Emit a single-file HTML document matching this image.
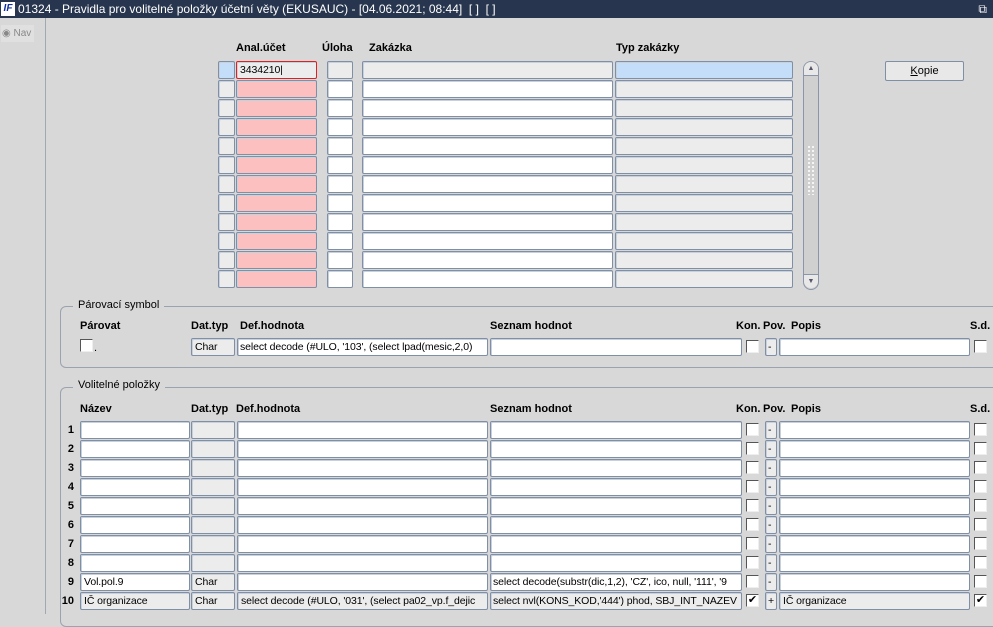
<!DOCTYPE html>
<html><head><meta charset="utf-8"><style>
*{box-sizing:border-box;margin:0;padding:0}
body{width:993px;height:614px;background:#d8d8d8;font-family:"Liberation Sans",Arial,sans-serif;font-size:11px;position:relative;overflow:hidden;color:#000}
.a{position:absolute}
.tb{left:0;top:0;width:993px;height:18px;background:#27364e;color:#fff;font-size:12px;line-height:18px;padding-left:18px;white-space:nowrap}
.f{position:absolute;height:18px;border:1px solid #7f8fa6;border-radius:2px;background:#fff;box-shadow:inset 1px 1px 0 #c8d0dc;line-height:16px;padding-left:3px;white-space:nowrap;overflow:hidden;font-size:10.5px;letter-spacing:-0.1px}
.g{background:#ececec}
.p{background:#fdc0c0}
.lb{position:absolute;font-weight:bold;font-size:11px}
.cb{position:absolute;width:13px;height:13px;background:#fff;border-top:1px solid #555;border-left:1px solid #555;border-right:1px solid #eee;border-bottom:1px solid #eee}
.fr{position:absolute;border:1px solid #9aa3b0;border-radius:6px}
.ft{position:absolute;background:#d8d8d8;padding:0 5px}
.n{position:absolute;font-weight:bold;width:14px;text-align:right}
</style></head><body>
<div class="a tb"><span class="a" style="left:1px;top:2px;width:14px;height:14px;background:#fff;color:#1030a0;font-weight:bold;font-style:italic;font-size:10px;line-height:14px;text-align:center">IF</span>01324 - Pravidla pro volitelné položky účetní věty (EKUSAUC) - [04.06.2021; 08:44] &nbsp;[ ] &nbsp;[ ]<span class="a" style="right:6px;top:0">&#x29C9;</span></div>
<div class="a" style="left:0;top:18px;width:46px;height:596px;border-right:1px solid #a0a8b4"></div>
<div class="a" style="left:1px;top:25px;width:33px;height:17px;background:#e0e0e0;color:#888;line-height:17px;padding-left:1px;white-space:nowrap;font-size:10px">&#9673; Nav</div>
<div class="lb" style="left:236px;top:42px">Anal.účet</div>
<div class="lb" style="left:322px;top:42px">Úloha</div>
<div class="lb" style="left:369px;top:42px">Zakázka</div>
<div class="lb" style="left:616px;top:42px">Typ zakázky</div>
<div class="a" style="left:803px;top:61px;width:16px;height:229px;background:#d0d0d0;border:1px solid #8a96a8;border-radius:8px"></div>
<div class="a" style="left:804px;top:62px;width:14px;height:14px;border-radius:7px 7px 0 0;background:#e8e8e8;border-bottom:1px solid #8a96a8;text-align:center;font-size:7px;line-height:13px;color:#556">&#9650;</div>
<div class="a" style="left:804px;top:274px;width:14px;height:14px;border-radius:0 0 7px 7px;background:#e8e8e8;border-top:1px solid #8a96a8;text-align:center;font-size:7px;line-height:13px;color:#556">&#9660;</div>
<div class="a" style="left:807px;top:145px;width:8px;height:50px;background-image:radial-gradient(circle,#f8f8f8 1px,transparent 1.2px);background-size:4px 4px"></div>
<div class="a" style="left:885px;top:61px;width:79px;height:20px;border:1px solid #7f8fa6;border-radius:2px;background:#e8e8e8;text-align:center;line-height:18px"><u>K</u>opie</div>
<div class="fr" style="left:60px;top:306px;width:960px;height:62px"></div>
<div class="ft" style="left:73px;top:299px">Párovací symbol</div>
<div class="lb" style="left:80px;top:320px">Párovat</div>
<div class="lb" style="left:191px;top:320px">Dat.typ</div>
<div class="lb" style="left:240px;top:320px">Def.hodnota</div>
<div class="lb" style="left:490px;top:320px">Seznam hodnot</div>
<div class="lb" style="left:736px;top:320px">Kon.</div>
<div class="lb" style="left:763px;top:320px">Pov.</div>
<div class="lb" style="left:791px;top:320px">Popis</div>
<div class="lb" style="left:970px;top:320px">S.d.</div>
<div class="cb" style="left:80px;top:339px"></div><div class="a" style="left:94px;top:342px">.</div>
<div class="f g" style="left:191px;top:338px;width:44px">Char</div>
<div class="f" style="left:237px;top:338px;width:251px;padding-left:2px">select decode (#ULO, '103', (select lpad(mesic,2,0)</div>
<div class="f" style="left:490px;top:338px;width:252px"></div>
<div class="cb" style="left:746px;top:340px"></div>
<div class="f g" style="left:765px;top:338px;width:12px;padding-left:2px">-</div>
<div class="f" style="left:779px;top:338px;width:191px"></div>
<div class="cb" style="left:974px;top:340px"></div>
<div class="fr" style="left:60px;top:387px;width:960px;height:240px"></div>
<div class="ft" style="left:73px;top:379px">Volitelné položky</div>
<div class="lb" style="left:80px;top:403px">Název</div>
<div class="lb" style="left:191px;top:403px">Dat.typ</div>
<div class="lb" style="left:236px;top:403px">Def.hodnota</div>
<div class="lb" style="left:490px;top:403px">Seznam hodnot</div>
<div class="lb" style="left:736px;top:403px">Kon.</div>
<div class="lb" style="left:763px;top:403px">Pov.</div>
<div class="lb" style="left:791px;top:403px">Popis</div>
<div class="lb" style="left:970px;top:403px">S.d.</div>
<div id="g"></div>
<script>
var h='';
for(var i=0;i<12;i++){var y=61+i*19;
h+='<div class="f '+(i==0?'':'g')+'" style="left:218px;top:'+y+'px;width:17px;'+(i==0?'background:#c4ddf8':'')+'"></div>';
h+=i==0?'<div class="f g" style="left:236px;top:'+y+'px;width:81px;border:1px solid #e02020">3434210|</div>':'<div class="f p" style="left:236px;top:'+y+'px;width:81px"></div>';
h+='<div class="f '+(i==0?'g':'')+'" style="left:327px;top:'+y+'px;width:26px"></div>';
h+='<div class="f '+(i==0?'g':'')+'" style="left:362px;top:'+y+'px;width:251px"></div>';
h+='<div class="f g" style="left:615px;top:'+y+'px;width:178px;'+(i==0?'background:#c4ddf8':'')+'"></div>';}
for(var i=0;i<10;i++){var y=421+i*19;var last=i==9,nine=i==8;
h+='<div class="n" style="left:60px;top:'+(y+3)+'px">'+(i+1)+'</div>';
h+='<div class="f '+(last?'g':'')+'" style="left:80px;top:'+y+'px;width:110px">'+(nine?'Vol.pol.9':last?'IČ organizace':'')+'</div>';
h+='<div class="f g" style="left:191px;top:'+y+'px;width:44px">'+(nine||last?'Char':'')+'</div>';
h+='<div class="f '+(last?'g':'')+'" style="left:237px;top:'+y+'px;width:251px">'+(last?"select decode (#ULO, '031', (select pa02_vp.f_dejic":'')+'</div>';
h+='<div class="f '+(last?'g':'')+'" style="left:490px;top:'+y+'px;width:252px;padding-left:2px">'+(nine?"select decode(substr(dic,1,2), 'CZ', ico, null, '111', '9":last?"select nvl(KONS_KOD,'444') phod, SBJ_INT_NAZEV":'')+'</div>';
h+='<div class="cb" style="left:746px;top:'+(y+2)+'px;text-align:center;line-height:10px;font-size:11px">'+(last?'&#10004;':'')+'</div>';
h+='<div class="f g" style="left:765px;top:'+y+'px;width:12px;padding-left:2px">'+(last?'+':'-')+'</div>';
h+='<div class="f '+(last?'g':'')+'" style="left:779px;top:'+y+'px;width:191px">'+(last?'IČ organizace':'')+'</div>';
h+='<div class="cb" style="left:974px;top:'+(y+2)+'px;text-align:center;line-height:10px;font-size:11px">'+(last?'&#10004;':'')+'</div>';}
document.getElementById('g').innerHTML=h;
</script>
</body></html>
